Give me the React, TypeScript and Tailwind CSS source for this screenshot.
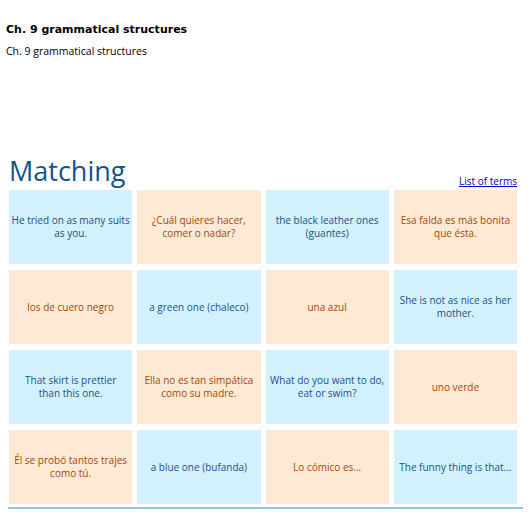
const cards = [
  { text: 'He tried on as many suits as you.', tone: 'blue' },
  { text: '¿Cuál quieres hacer, comer o nadar?', tone: 'peach' },
  { text: 'the black leather ones (guantes)', tone: 'blue' },
  { text: 'Esa falda es más bonita que ésta.', tone: 'peach' },
  { text: 'los de cuero negro', tone: 'peach' },
  { text: 'a green one (chaleco)', tone: 'blue' },
  { text: 'una azul', tone: 'peach' },
  { text: 'She is not as nice as her mother.', tone: 'blue' },
  { text: 'That skirt is prettier than this one.', tone: 'blue', narrow: true },
  { text: 'Ella no es tan simpática como su madre.', tone: 'peach' },
  { text: 'What do you want to do, eat or swim?', tone: 'blue' },
  { text: 'uno verde', tone: 'peach' },
  { text: 'Él se probó tantos trajes como tú.', tone: 'peach' },
  { text: 'a blue one (bufanda)', tone: 'blue' },
  { text: 'Lo cómico es...', tone: 'peach' },
  { text: 'The funny thing is that...', tone: 'blue' },
];

function Card({ text, tone, narrow }: { text: string; tone: string; narrow?: boolean }) {
  return (
    <div
      className={
        tone === 'blue'
          ? 'h-[74px] flex items-center justify-center px-[2px] text-center bg-[#d3f1fd] text-[#1d4f8c]'
          : 'h-[74px] flex items-center justify-center px-[2px] text-center bg-[#fee9d4] text-[#a4480a]'
      }
    >
      <span className={narrow ? 'max-w-[100px] text-[10px] leading-[13px]' : 'text-[10px] leading-[13px]'}>
        {text}
      </span>
    </div>
  );
}

export default function App() {
  return (
    <div className="w-[529px] h-[519px] bg-white font-['Open_Sans',sans-serif] text-black">
      <div className="px-[6px] pt-[22px]">
        <h1 className="font-['DejaVu_Sans',sans-serif] text-[11px] leading-[16px] font-bold">
          Ch. 9 grammatical structures
        </h1>
        <p className="mt-[6px] text-[10.5px] leading-[14px]">Ch. 9 grammatical structures</p>
      </div>
      <div className="mt-[96px] ml-[9px] w-[508px] flex items-end justify-between">
        <h2 className="text-[27px] leading-[34px] text-[#12548f]">Matching</h2>
        <a href="#" className="mb-[1px] text-[10px] leading-[12px] text-[#0000cc] underline">
          List of terms
        </a>
      </div>
      <div className="mt-[2px] ml-[9px] w-[508px] grid grid-cols-4 gap-x-[5px] gap-y-[6px]">
        {cards.map((c, i) => (
          <Card key={i} text={c.text} tone={c.tone} narrow={c.narrow} />
        ))}
      </div>
      <div className="mt-[3px] ml-[8px] w-[515px] h-[2px] bg-[#8cc8dd]" />
    </div>
  );
}
